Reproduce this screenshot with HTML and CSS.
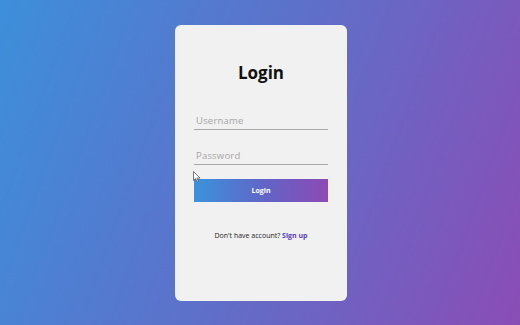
FILE: index.html
```html
<!DOCTYPE html>
<html lang="en">
<head>
    <meta charset="UTF-8">
    <meta name="viewport" content="width=device-width, initial-scale=1.0">
    <title>Login</title>
    <link rel="stylesheet" href="styles.css">
</head>
<body>

    <!-- Login Card -->
    <div class="card">
        <h2 class="title">Login</h2>
        <form class="login-form">
            <input type="text" class="field" placeholder="Username">
            <input type="password" class="field" placeholder="Password">
            <button type="button" class="btn">Login</button>
        </form>
        <p class="signup">Don't have account? <a href="#">Sign up</a></p>

        <!-- mouse pointer from the screenshot -->
        <svg class="cursor" width="8" height="12" viewBox="0 0 8 12">
            <path d="M0.5 0.5 L0.5 9.5 L2.6 7.6 L4 11 L5.4 10.4 L4 7.1 L7 7.1 Z" fill="#fff" stroke="#555" stroke-width="0.8"/>
        </svg>
    </div>

</body>
</html>
```
FILE: styles.css
```css
/* Page background */
body {
    font-family: "Open Sans", "Liberation Sans", sans-serif;
    margin: 0;
    padding: 0;
    height: 325px;
    display: flex;
    align-items: center;
    justify-content: center;
    background: linear-gradient(110deg, #3d8fdb 0%, #5f6fc9 50%, #8a4db6 100%);
}

.card {
    position: relative;
    width: 172px;
    height: 276px;
    box-sizing: border-box;
    margin-left: 2px;
    padding: 37px 19px 0;
    background-color: #f1f1f1;
    border-radius: 6px;
}

.title {
    margin: 0;
    font-size: 17px;
    line-height: 21px;
    font-weight: 700;
    text-align: center;
    color: #111;
}

.login-form {
    display: flex;
    flex-direction: column;
    margin-top: 26px;
}

.field {
    box-sizing: border-box;
    height: 21px;
    padding: 3px 2px 0;
    margin-bottom: 14px;
    border: none;
    border-bottom: 1px solid #a9a9a9;
    background: transparent;
    font-family: inherit;
    font-size: 9.5px;
    letter-spacing: 0.2px;
    color: #444;
    outline: none;
}

.field::placeholder {
    color: #a6a6a6;
}

.field:last-of-type {
    margin-bottom: 14px;
}

.btn {
    height: 23px;
    border: none;
    background: linear-gradient(90deg, #3a93dc 0%, #6363c6 55%, #8d4ab5 100%);
    color: #fff;
    font-family: inherit;
    font-size: 7px;
    font-weight: 700;
    cursor: pointer;
}

.signup {
    margin: 29px 0 0;
    font-size: 7px;
    line-height: 10px;
    text-align: center;
    color: #222;
}

.signup a {
    color: #5a3db4;
    font-weight: 700;
    text-decoration: none;
}

.cursor {
    position: absolute;
    left: 18px;
    top: 146px;
}
```
